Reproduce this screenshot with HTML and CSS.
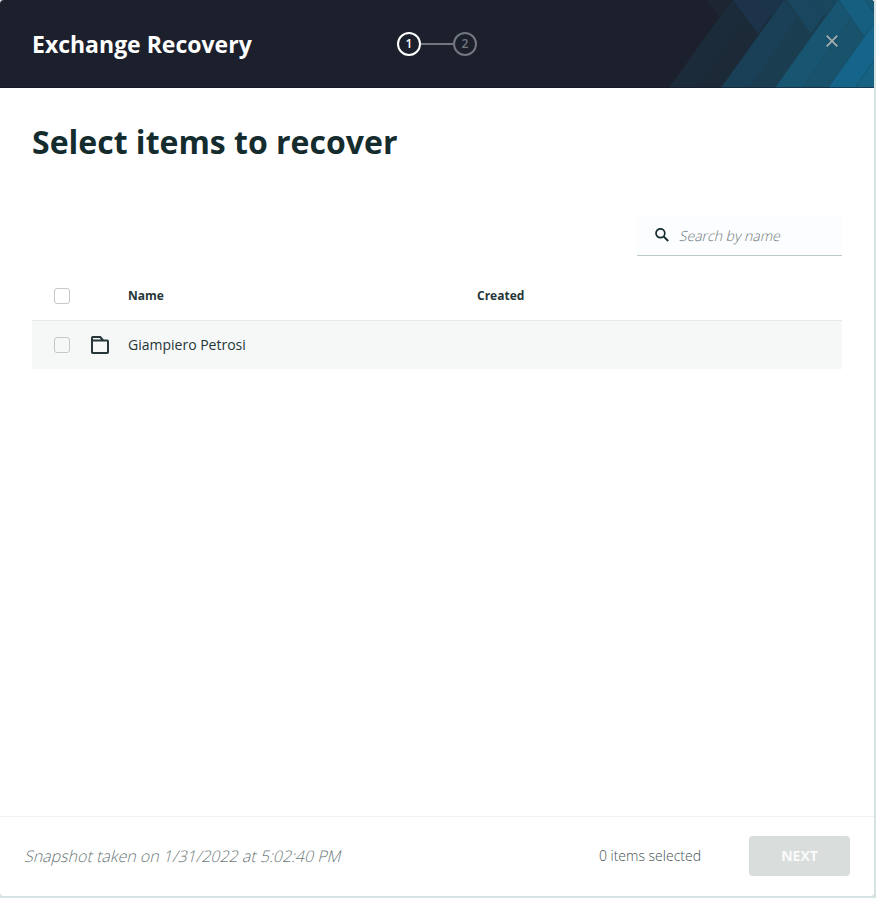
FILE: index.html
```html
<!DOCTYPE html>
<html lang="en">
<head>
<meta charset="utf-8">
<title>Exchange Recovery</title>
<link rel="stylesheet" href="styles.css">
</head>
<body>
<div class="dialog">
  <header class="header">
    <svg class="decor" width="218" height="88" viewBox="0 0 218 88" aria-hidden="true">
      <path fill="#1c2a38" d="M13 88 76 0H218V88z"/>
      <path fill="#1b2b3a" d="M13 88 76 0 88 18 41 88z"/>
      <path fill="#1d2530" d="M50 0H76L63 17z"/>
      <path fill="#1c3349" d="M77 0H105L115 15 102 34z"/>
      <path fill="#1c3449" d="M105 0H128L115 17z"/>
      <path fill="#1b3d50" d="M65 88 128 0H218V88z"/>
      <path fill="#1a4057" d="M65 88 128 0 141 18 93 88z"/>
      <path fill="#1a465f" d="M131 0H157L168 15 155 34z"/>
      <path fill="#1a475e" d="M157 0H182L168 17z"/>
      <path fill="#19526b" d="M119 88 182 0H218V88z"/>
      <path fill="#185570" d="M119 88 182 0 195 18 146 88z"/>
      <path fill="#165f81" d="M183 0H209L218 13V23L208 36z"/>
      <path fill="#185977" d="M209 0H218V13z"/>
      <path fill="#15648a" d="M172 88 218 23V88z"/>
      <path fill="#176283" d="M199 88 218 60V88z"/>
      <path fill="none" stroke="#194d65" stroke-width=".6" d="M146 88 195 18M172 88 218 23M199 88 218 60M209 0 218 13M183 0 208 36"/>
    </svg>
    <div class="title">Exchange Recovery</div>
    <div class="steps">
      <span class="step active">1</span><span class="line"></span><span class="step">2</span>
    </div>
    <svg class="close" width="12" height="12" viewBox="0 0 12 12"><path d="M.7.7 11.3 11.3M11.3.7.7 11.3" stroke="#a7aaad" stroke-width="1.8"/></svg>
  </header>
  <main class="main">
    <h1>Select items to recover</h1>
    <label class="search">
      <svg width="14" height="14" viewBox="0 0 14 14" fill="none" stroke="#152c2e"><circle cx="5.4" cy="5.2" r="4.4" stroke-width="1.7"/><path d="M8.5 8.3 13.2 13" stroke-width="1.9"/></svg>
      <span class="slanted">Search by name</span>
    </label>
    <div class="row head">
      <span class="check"></span><span></span><span>Name</span><span>Created</span>
    </div>
    <div class="row item">
      <span class="check"></span>
      <svg width="18" height="18" viewBox="0 0 18 18" fill="none" stroke="#263638" stroke-width="2"><path d="M1 4.5V1.7Q1 1 1.7 1H9.2L12 4.2M1 4.5H16.3Q17 4.5 17 5.2V16.3Q17 17 16.3 17H1.7Q1 17 1 16.3z"/></svg>
      <span class="name">Giampiero Petrosi</span><span></span>
    </div>
  </main>
  <footer class="footer">
    <div class="snapshot"><span class="slanted">Snapshot taken on 1/31/2022 at 5:02:40 PM</span></div>
    <span class="count">0 items selected</span>
    <button class="next" disabled>NEXT</button>
  </footer>
</div>
</body>
</html>
```
FILE: styles.css
```css
* { box-sizing: border-box; }
body {
  margin: 0;
  height: 898px;
  overflow: hidden;
  background: #d7e2e5;
  font-family: "Open Sans", sans-serif;
  color: #263638;
}
.dialog {
  width: 874px;
  height: 896px;
  display: flex;
  flex-direction: column;
  background: #fff;
  border-radius: 4px;
  overflow: hidden;
}
.header {
  position: relative;
  height: 88px;
  flex: none;
  display: grid;
  grid-template-columns: 365px 1fr 12px;
  align-items: center;
  padding: 0 36px 0 32px;
  background: #1c202c;
}
.header::after {
  content: "";
  position: absolute;
  inset: auto 0 0;
  height: 1px;
  background: rgba(20, 20, 35, .5);
}
.decor { position: absolute; right: 0; top: 0; }
.title { font-size: 23px; font-weight: 700; line-height: 30px; color: #fff; white-space: nowrap; }
.steps { display: flex; align-items: center; }
.step {
  width: 24px;
  height: 24px;
  border: 2px solid #737780;
  border-radius: 50%;
  color: #737780;
  font-size: 12px;
  font-weight: 600;
  line-height: 20px;
  text-align: center;
}
.step.active { border-color: #fff; color: #fff; }
.line { width: 32px; height: 2px; background: #737780; }
.close { position: relative; margin-bottom: 6px; }
.main { flex: 1; padding: 32px 32px 0; display: flex; flex-direction: column; }
h1 { margin: 0 0 52px; font-size: 32px; line-height: 44px; font-weight: 700; color: #152c2e; }
.search {
  width: 205px;
  height: 40px;
  align-self: flex-end;
  display: flex;
  align-items: center;
  gap: 10px;
  padding-left: 18px;
  border-bottom: 1px solid #bcc9cb;
  border-radius: 2px 2px 0 0;
  background: #fcfdff;
  font-size: 14px;
  font-weight: 300;
  color: #6c797a;
}
.search svg { margin-bottom: 1px; }
.slanted {
  display: inline-block;
  transform: skewX(-14deg);
  transform-origin: 0 76%;
}
.row {
  display: grid;
  grid-template-columns: 37px 37px 349px 1fr;
  align-items: center;
  padding-left: 22px;
}
.row.head {
  height: 65px;
  padding-top: 15px;
  border-bottom: 1px solid #e4e9e9;
  font-size: 12px;
  font-weight: 700;
}
.row.item { height: 48px; background: #f5f8f7; font-size: 14px; }
.name { padding-bottom: 2px; }
.check { width: 16px; height: 16px; border: 1px solid #c3c9c9; border-radius: 3px; }
.footer {
  height: 80px;
  flex: none;
  display: flex;
  align-items: center;
  padding: 0 24px 1px;
  border-top: 1px solid #f0f2f2;
  font-weight: 300;
}
.snapshot { flex: 1; font-size: 16px; color: #6c797a; }
.count { margin-right: 48px; padding-bottom: 1px; font-size: 14px; color: #435153; }
.next {
  width: 101px;
  height: 40px;
  padding: 0 0 2px;
  border: 0;
  border-radius: 4px;
  background: #d9dedd;
  color: #fafbfb;
  font: 700 14px "Open Sans", sans-serif;
}
```
